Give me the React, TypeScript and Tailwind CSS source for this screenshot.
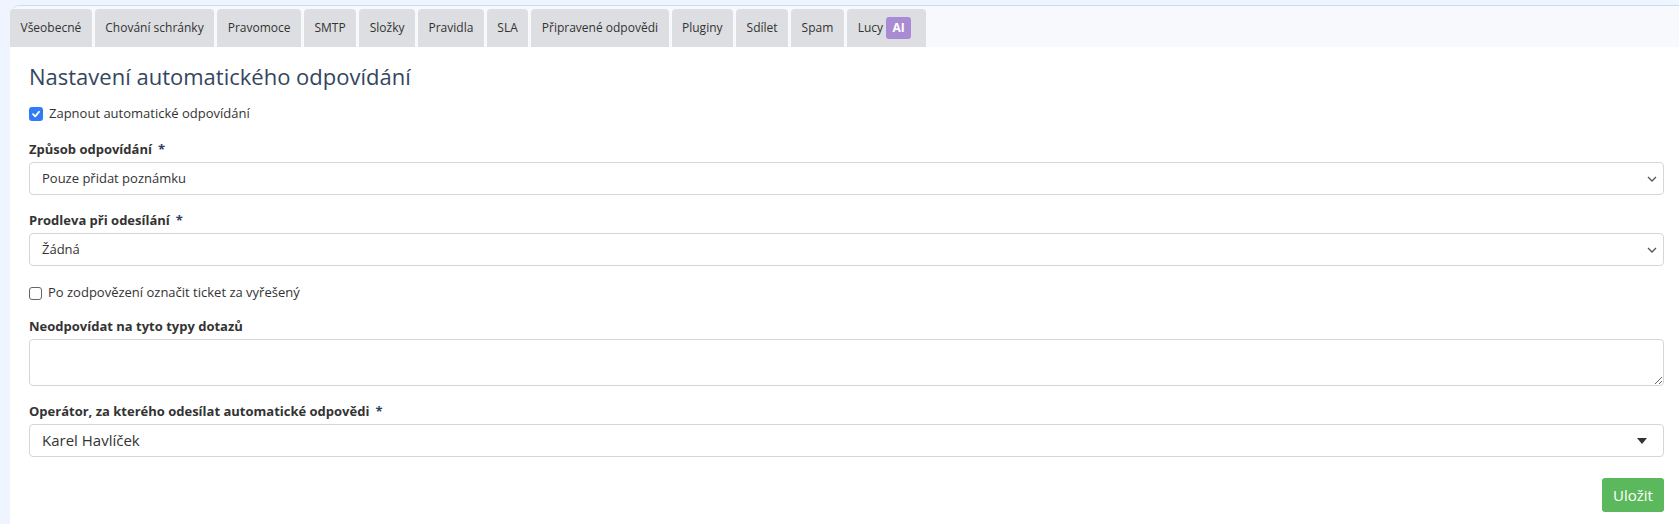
import React from "react";

const tabs = [
  "Všeobecné",
  "Chování schránky",
  "Pravomoce",
  "SMTP",
  "Složky",
  "Pravidla",
  "SLA",
  "Připravené odpovědi",
  "Pluginy",
  "Sdílet",
  "Spam",
];

function Chevron() {
  return (
    <svg width="10" height="6" viewBox="0 0 10 6" className="shrink-0">
      <path d="M1 1 L5 5 L9 1" fill="none" stroke="#555" strokeWidth="1.3" />
    </svg>
  );
}

function Label({ text, required }: { text: string; required?: boolean }) {
  return (
    <div className="text-[13px] leading-[18px] font-bold text-[#333] mb-[4px]">
      {text}
      {required && <span className="text-[#2b3e63] ml-[6px]">*</span>}
    </div>
  );
}

function SelectBox({ value }: { value: string }) {
  return (
    <div className="h-[33px] border border-[#d6d6d6] rounded-[4px] bg-white flex items-center justify-between pl-[12px] pr-[6px]">
      <span className="text-[13px] text-[#333]">{value}</span>
      <Chevron />
    </div>
  );
}

export default function App() {
  return (
    <div
      className="w-[1679px] h-[524px] bg-[#eef5fe] pt-[5px] pl-[10px] overflow-hidden"
      style={{ fontFamily: '"Open Sans", "Noto Sans", sans-serif' }}
    >
      <div className="h-full bg-white border-t border-[#c6dcf5] rounded-tl-[10px] flex flex-col">
        <div className="bg-[#f7f9fc] pt-[3px] flex gap-[3px] rounded-tl-[10px]">
          {tabs.map((t) => (
            <div
              key={t}
              className="h-[38px] px-[10.5px] bg-[#dddee1] rounded-t-[4px] flex items-center text-[12px] text-[#333]"
            >
              {t}
            </div>
          ))}
          <div className="h-[38px] pl-[11px] pr-[15px] bg-[#dddee1] rounded-t-[4px] flex items-center text-[12px] text-[#333] gap-[3px]">
            Lucy
            <span className="w-[25px] h-[22px] rounded-[3px] bg-[#a98bd3] text-white text-[12px] font-bold flex items-center justify-center">
              AI
            </span>
          </div>
        </div>
        <div className="px-[19px] pr-[15px] flex flex-col">
          <h1 className="text-[22px] leading-[28px] text-[#34465e] mt-[15px] font-normal">
            Nastavení automatického odpovídání
          </h1>
          <label className="flex items-center gap-[6px] h-[18px] mt-[15px]">
            <span className="w-[14px] h-[14px] rounded-[3px] bg-[#2f7cf6] flex items-center justify-center">
              <svg width="10" height="10" viewBox="0 0 10 10">
                <path d="M2 5.2 L4.2 7.3 L8 2.8" fill="none" stroke="white" strokeWidth="1.8" strokeLinecap="round" strokeLinejoin="round" />
              </svg>
            </span>
            <span className="text-[13px] text-[#333]">Zapnout automatické odpovídání</span>
          </label>
          <div className="mt-[17px]">
            <Label text="Způsob odpovídání" required />
            <SelectBox value="Pouze přidat poznámku" />
          </div>
          <div className="mt-[16px]">
            <Label text="Prodleva při odesílání" required />
            <SelectBox value="Žádná" />
          </div>
          <label className="flex items-center gap-[6px] h-[18px] mt-[18px]">
            <span className="w-[13px] h-[13px] rounded-[3px] border border-[#666] bg-white" />
            <span className="text-[13px] text-[#333]">Po zodpovězení označit ticket za vyřešený</span>
          </label>
          <div className="mt-[15px]">
            <Label text="Neodpovídat na tyto typy dotazů" />
            <textarea className="block w-full h-[47px] border border-[#d6d6d6] rounded-[4px] bg-white outline-none" />
          </div>
          <div className="mt-[16px]">
            <Label text="Operátor, za kterého odesílat automatické odpovědi" required />
            <div className="h-[33px] border border-[#d6d6d6] rounded-[4px] bg-white flex items-center justify-between pl-[12px] pr-[16px]">
              <span className="text-[15px] text-[#333]">Karel Havlíček</span>
              <svg width="10" height="6" viewBox="0 0 10 6">
                <path d="M0 0 L10 0 L5 6 Z" fill="#333" />
              </svg>
            </div>
          </div>
          <div className="flex justify-end mt-[21px]">
            <button className="h-[34px] w-[62px] rounded-[3px] bg-[#5cb85c] text-white text-[15px]">
              Uložit
            </button>
          </div>
        </div>
      </div>
    </div>
  );
}
